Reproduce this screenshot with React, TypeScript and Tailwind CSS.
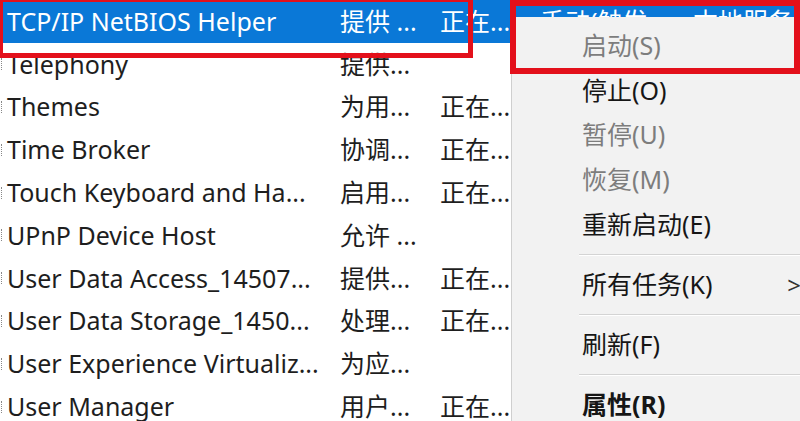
import React from "react";

// service rows: name, description, status
const rows: [string, string, string][] = [
  ["TCP/IP NetBIOS Helper", "提供 ...", "正在..."],
  ["Telephony", "提供...", ""],
  ["Themes", "为用...", "正在..."],
  ["Time Broker", "协调...", "正在..."],
  ["Touch Keyboard and Ha...", "启用...", "正在..."],
  ["UPnP Device Host", "允许 ...", ""],
  ["User Data Access_14507...", "提供...", "正在..."],
  ["User Data Storage_1450...", "处理...", "正在..."],
  ["User Experience Virtualiz...", "为应...", ""],
  ["User Manager", "用户...", "正在..."],
];

type MenuEntry =
  | { kind: "item"; label: string; key: string; disabled?: boolean; bold?: boolean; sub?: boolean; tall?: boolean }
  | { kind: "sep" };

const menu: MenuEntry[] = [
  { kind: "item", label: "启动", key: "(S)", disabled: true, tall: true },
  { kind: "item", label: "停止", key: "(O)", tall: true },
  { kind: "item", label: "暂停", key: "(U)", disabled: true, tall: true },
  { kind: "item", label: "恢复", key: "(M)", disabled: true, tall: true },
  { kind: "item", label: "重新启动", key: "(E)", tall: true },
  { kind: "sep" },
  { kind: "item", label: "所有任务", key: "(K)", sub: true },
  { kind: "sep" },
  { kind: "item", label: "刷新", key: "(F)" },
  { kind: "sep" },
  { kind: "item", label: "属性", key: "(R)", bold: true },
];

const font = { fontFamily: '"Noto Sans", "Noto Sans CJK SC", sans-serif' };

export default function App() {
  return (
    <div className="relative w-[800px] h-[421px] overflow-hidden bg-white" style={font}>
      {/* services list */}
      <div className="flex flex-col">
        {rows.map((r, i) => {
          const sel = i === 0;
          return (
            <div
              key={i}
              className={`flex items-center h-[42.8px] shrink-0 text-[25px] leading-none whitespace-nowrap ${
                sel ? "bg-[#0a78d7] text-white" : "text-[#1e1e1e]"
              }`}
            >
              <span className="w-[7px] h-[12px] border-l border-dotted border-[#888] ml-[1px] mr-[-1px]" />
              <span className="w-[333px]">{r[0]}</span>
              <span className="w-[100px]">{r[1]}</span>
              <span className="w-[100px]">{r[2]}</span>
              {sel && (
                <>
                  <span className="w-[153px]">手动(触发...</span>
                  <span>本地服务</span>
                </>
              )}
            </div>
          );
        })}
      </div>

      {/* context menu */}
      <div className="absolute left-[511px] top-[17px] w-[300px] h-[420px] bg-[#f2f2f2] border-l border-[#cfcfcf] pt-[6px] flex flex-col">
        {menu.map((m, i) =>
          m.kind === "sep" ? (
            <div key={i} className="h-[16px] flex items-center pl-[67px] shrink-0">
              <div className="w-full border-t border-[#d4d4d4] border-b border-b-white" />
            </div>
          ) : (
            <div
              key={i}
              className={`flex items-center shrink-0 pl-[70px] text-[25px] leading-none ${
                m.tall ? "h-[44.8px]" : "h-[44px]"
              } ${m.disabled ? "text-[#7d7d7d]" : "text-[#161616]"} ${m.bold ? "font-bold" : ""}`}
            >
              <span>
                {m.label}
                {m.key}
              </span>
              {m.sub && <span className="ml-auto mr-[10px] text-[24px] text-[#333]">&gt;</span>}
            </div>
          )
        )}
      </div>

      {/* red annotation boxes */}
      <div className="absolute left-[-2px] top-[-3px] w-[475px] h-[61px] border-[5px] border-[#e3101b]" />
      <div className="absolute left-[510px] top-0 w-[290px] h-[74px] border-[6px] border-[#e3101b]" />
    </div>
  );
}
